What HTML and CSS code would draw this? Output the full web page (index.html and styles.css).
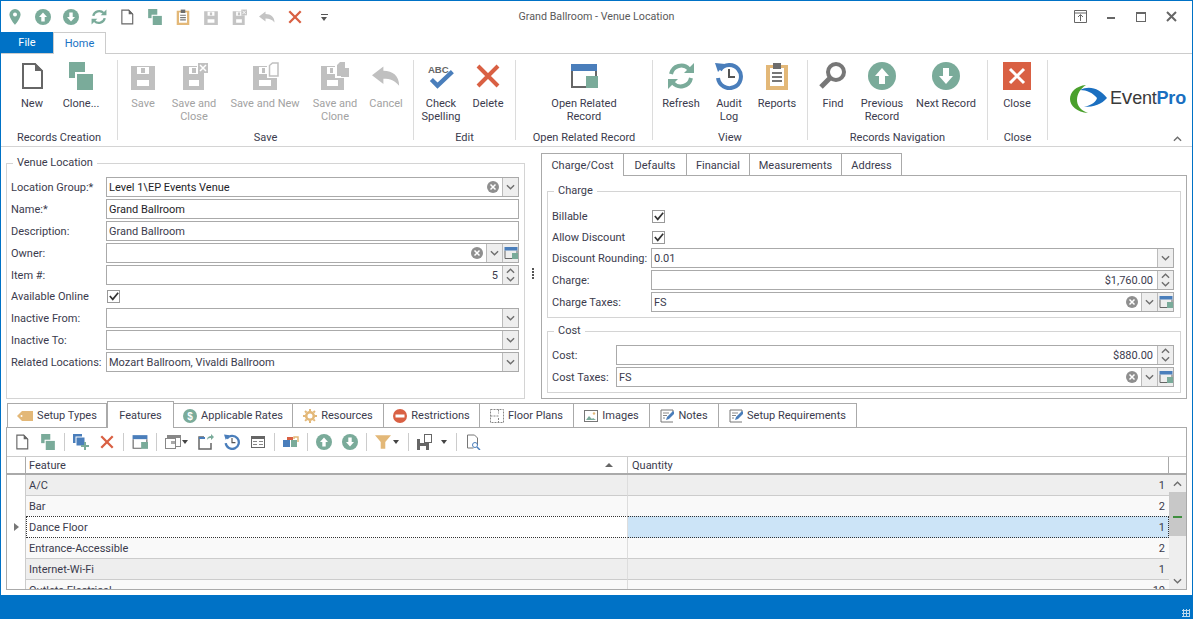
FILE: index.html
```html
<!DOCTYPE html>
<html lang="en">
<head>
<meta charset="utf-8">
<title>Grand Ballroom - Venue Location</title>
<link rel="stylesheet" href="styles.css">
</head>
<body>
<svg class="sprite" xmlns="http://www.w3.org/2000/svg">
  <symbol id="pin" viewBox="0 0 16 16"><path fill-rule="evenodd" d="M8 0a5.6 5.6 0 0 1 5.6 5.6C13.600 9.500 8 16 8 16S2.400 9.500 2.400 5.600A5.600 5.600 0 0 1 8 0zM8 3.600a2 2 0 1 0 0 4 2 2 0 0 0 0-4z" fill="#7aab9a"/></symbol>
  <symbol id="up" viewBox="0 0 28 28"><circle cx="14" cy="14" r="14" fill="#7aab9a"/><path d="M14 6l7 8h-4v8h-6v-8H7z" fill="#fff"/></symbol>
  <symbol id="down" viewBox="0 0 28 28"><circle cx="14" cy="14" r="14" fill="#7aab9a"/><path d="M14 22l-7-8h4V6h6v8h4z" fill="#fff"/></symbol>
  <symbol id="refresh" viewBox="0 0 28 28"><path d="M4 12A10.500 10.500 0 0 1 22 7" fill="none" stroke="#7aab9a" stroke-width="4"/><path d="M17 11h10V1z" fill="#7aab9a"/><path d="M24 16A10.500 10.500 0 0 1 6 21" fill="none" stroke="#7aab9a" stroke-width="4"/><path d="M11 17H1v10z" fill="#7aab9a"/></symbol>
  <symbol id="page" viewBox="0 0 28 28"><path d="M5 2h12l7 7v17H5z" fill="#fff" stroke="#666" stroke-width="2"/><path d="M17 1v8h8z" fill="#666"/></symbol>
  <symbol id="clone" viewBox="0 0 28 28"><rect x="2" y="0" width="16" height="16" fill="#7aab9a"/><rect x="9" y="11" width="18" height="18" fill="#7aab9a" stroke="#fff" stroke-width="2"/></symbol>
  <symbol id="clip" viewBox="0 0 28 28"><rect x="3" y="3" width="22" height="25" fill="#e3b878"/><rect x="7" y="6" width="14" height="18" fill="#fff"/><rect x="10" y="1" width="8" height="6" fill="#6d6d6d"/><path d="M9 11h10M9 15h10M9 19h10" stroke="#777" stroke-width="2"/></symbol>
  <symbol id="save" viewBox="0 0 28 28"><path fill-rule="evenodd" d="M2 4h24v24H2zM8 5v7h12V5zM8 18v6h12v-6z" fill="currentColor"/><rect x="12" y="6" width="4" height="5" fill="currentColor"/></symbol>
  <symbol id="savex" viewBox="0 0 28 28"><path fill-rule="evenodd" d="M3 4h21v24H3zM9 5v7h9V5zM9 18v6h10v-6z" fill="currentColor"/><rect x="12" y="6" width="4" height="5" fill="currentColor"/><rect x="17" y="0" width="11" height="11" fill="#fff"/><rect x="18" y="1" width="10" height="10" fill="currentColor"/><path d="M20 3l6 6M26 3l-6 6" stroke="#fff" stroke-width="1.500"/></symbol>
  <symbol id="saven" viewBox="0 0 28 28"><path fill-rule="evenodd" d="M2 4h24v24H2zM8 5v7h8V5zM8 18v6h12v-6z" fill="currentColor"/><rect x="11" y="6" width="3" height="5" fill="currentColor"/><rect x="16" y="0" width="12" height="16" fill="#fff"/><path d="M18.500 14V3.500l3-2.500h5.500v13z" fill="none" stroke="currentColor" stroke-width="1.500"/></symbol>
  <symbol id="savec" viewBox="0 0 28 28"><path fill-rule="evenodd" d="M0 4h23v24H0zM6 5v7h8V5zM6 18v6h11v-6z" fill="currentColor"/><rect x="9" y="6" width="3" height="5" fill="currentColor"/><rect x="14" y="0" width="14" height="16" fill="#fff"/><path d="M16 14V3l3-3h5v6h4v9h-8v-1z" fill="currentColor"/></symbol>
  <symbol id="undo" viewBox="0 0 32 28"><path d="M13 3L0 13l13 10v-6c8 0 13 2 18 8 0-11-7-17-18-17z" fill="currentColor"/></symbol>
  <symbol id="x" viewBox="0 0 28 28"><path d="M4 4l20 20M24 4L4 24" stroke="#d96043" stroke-width="4"/></symbol>
  <symbol id="spell" viewBox="0 0 32 28"><text x="1" y="10" class="abc">ABC</text><path d="M5 18l7 7L29 9" fill="none" stroke="#4a7ebb" stroke-width="5"/></symbol>
  <symbol id="win" viewBox="0 0 28 28"><path d="M2 9v16h15" fill="none" stroke="#666" stroke-width="2"/><path d="M26 9v5" stroke="#666" stroke-width="2"/><rect x="1" y="2" width="26" height="7" fill="#4a7ebb"/><rect x="16" y="14" width="12" height="12" fill="#7aab9a"/></symbol>
  <symbol id="audit" viewBox="0 0 28 28"><path d="M5 8A11.500 11.500 0 1 1 3 16" fill="none" stroke="#4a7ebb" stroke-width="4"/><path d="M0 1l10 1-7 8z" fill="#4a7ebb"/><path d="M14 7v8h6" fill="none" stroke="#555" stroke-width="2"/></symbol>
  <symbol id="find" viewBox="0 0 28 28"><circle cx="17" cy="10" r="8" fill="none" stroke="#777" stroke-width="4"/><path d="M11 16L2 25" stroke="#777" stroke-width="5"/></symbol>
  <symbol id="closebox" viewBox="0 0 28 28"><rect width="28" height="28" fill="#d96043"/><path d="M7 7l14 14M21 7L7 21" stroke="#fff" stroke-width="3"/></symbol>
  <symbol id="clear" viewBox="0 0 12 12"><circle cx="6" cy="6" r="6" fill="#8f8f8f"/><path d="M3.500 3.500l5 5M8.500 3.500l-5 5" stroke="#fff" stroke-width="1.500"/></symbol>
  <symbol id="chev" viewBox="0 0 10 6"><path d="M1 1l4 4 4-4" fill="none" stroke="#6d6d6d" stroke-width="1.500"/></symbol>
  <symbol id="chevu" viewBox="0 0 10 6"><path d="M1 5l4-4 4 4" fill="none" stroke="#6d6d6d" stroke-width="1.500"/></symbol>
  <symbol id="check" viewBox="0 0 12 12"><path d="M1 6l3.500 4L11 2" fill="none" stroke="#333" stroke-width="2"/></symbol>
  <symbol id="addclone" viewBox="0 0 16 16"><rect x="0" y="0" width="9" height="9" fill="#4a7ebb"/><rect x="3" y="3" width="9" height="9" fill="#4a7ebb" stroke="#fff"/><path d="M12 8v8M8 12h8" stroke="#7aab9a" stroke-width="2"/></symbol>
  <symbol id="dropwin" viewBox="0 0 16 16"><rect x="2.500" y="1.500" width="13" height="11" fill="#fff" stroke="#888"/><rect x="2" y="1" width="14" height="3" fill="#888"/><rect x="0.500" y="4.500" width="10" height="10" fill="#fff" stroke="#888"/><rect x="6" y="7" width="4" height="3" fill="#aaa"/></symbol>
  <symbol id="export" viewBox="0 0 16 16"><path d="M6 3H1v12h12V9" fill="none" stroke="#666" stroke-width="1.500"/><rect x="1" y="3" width="6" height="2" fill="#4a7ebb"/><path d="M9 6c0-3 2-4 4-4V0l3 3-3 3V4c-1 0-3 0-4 2z" fill="#7aab9a"/></symbol>
  <symbol id="layout" viewBox="0 0 16 16"><rect x="1.500" y="2.500" width="13" height="11" fill="#fff" stroke="#666"/><rect x="1" y="2" width="14" height="3" fill="#666"/><path d="M3 7h4v1H3zM9 7h4v1H9zM9 10h4v1H9zM3 10h4v1H3z" fill="#888"/></symbol>
  <symbol id="blocks" viewBox="0 0 16 16"><rect x="0" y="6" width="7" height="7" fill="#4a7ebb"/><rect x="8" y="6" width="6" height="7" fill="#7aab9a"/><rect x="4" y="3" width="6" height="3" fill="#d96043"/><path d="M11 5V3h4v5" fill="none" stroke="#e3b878" stroke-width="1.500"/></symbol>
  <symbol id="funnel" viewBox="0 0 14 14"><path d="M0 1h14L9 7v6H5V7z" fill="#e3b878"/></symbol>
  <symbol id="savebar" viewBox="0 0 16 16"><path fill-rule="evenodd" d="M0 5h10v2h2v9H0zM3 5v4h4V5zM3 12v4h6v-4z" fill="#666"/><rect x="7.500" y="0.500" width="7" height="8" fill="#fff" stroke="#666"/></symbol>
  <symbol id="docfind" viewBox="0 0 16 16"><path d="M2.500 1h7l3 3v7M2.500 1v13h6" fill="none" stroke="#777"/><circle cx="10" cy="11" r="2.500" fill="none" stroke="#4a7ebb"/><path d="M12 13l3 3" stroke="#4a7ebb" stroke-width="1.500"/></symbol>
  <symbol id="tag" viewBox="0 0 16 12"><path d="M5 1h11v10H5L0 6z" fill="#e3b878"/><circle cx="4.500" cy="6" r="1" fill="#fff"/></symbol>
  <symbol id="dollar" viewBox="0 0 14 14"><circle cx="7" cy="7" r="7" fill="#7aab9a"/><text x="7" y="11" class="dollar">$</text></symbol>
  <symbol id="gear" viewBox="0 0 14 14"><circle cx="7" cy="7" r="3.800" fill="none" stroke="#e3b878" stroke-width="2.600"/><path d="M7 0v14M0 7h14M2 2l10 10M12 2L2 12" stroke="#e3b878" stroke-width="2" stroke-dasharray="2.200 9.600"/></symbol>
  <symbol id="noentry" viewBox="0 0 14 14"><circle cx="7" cy="7" r="7" fill="#d96043"/><rect x="2.500" y="5.500" width="9" height="3" fill="#fff"/></symbol>
  <symbol id="floor" viewBox="0 0 14 14"><path d="M.5.500h13v13H.5zM8.500.5v4M8.500 9v4.500M.5 7h8" fill="none" stroke="#888" stroke-dasharray="2 1"/></symbol>
  <symbol id="image" viewBox="0 0 14 12"><rect x=".5" y=".5" width="13" height="11" fill="#fff" stroke="#777"/><path d="M2 10l3-4 3 3 1-1 3 2z" fill="#7aab9a"/><circle cx="10" cy="3.500" r="1.200" fill="#e3b878"/></symbol>
  <symbol id="note" viewBox="0 0 14 14"><path d="M13 5V1H1v12h12" fill="none" stroke="#777"/><path d="M3 4h6M3 6.500h4M3 9h2" stroke="#888"/><path d="M6 11l1-3 6-6 2 2-6 6z" fill="#4a7ebb"/></symbol>
  <symbol id="winpin" viewBox="0 0 13 13"><path d="M.5.500h12v12H.5zM.5 3h12M6.500 11V5M4 7l2.500-2.500L9 7" fill="none" stroke="#666"/></symbol>
  <symbol id="winx" viewBox="0 0 11 11"><path d="M1 1l9 9M10 1L1 10" stroke="#666" stroke-width="2"/></symbol>
  <symbol id="swoosh" viewBox="0 0 38 28"><path d="M16 0C6 1 0 7 0 14s7 13 18 14C10 25 7 20 7 15 7 9 10 4 16 0z" fill="#4aa02c"/><path d="M10 5c10-5 20-1 27 8-5 6-13 9-23 9 8-2 12-5 13-9-4-5-10-8-17-8z" fill="#1a6fc0"/></symbol>
</svg>

<div class="window">
  <header class="titlebar">
    <div class="qat">
      <svg class="qi"><use href="#pin"/></svg>
      <svg class="qi"><use href="#up"/></svg>
      <svg class="qi"><use href="#down"/></svg>
      <svg class="qi"><use href="#refresh"/></svg>
      <svg class="qi"><use href="#page"/></svg>
      <svg class="qi"><use href="#clone"/></svg>
      <svg class="qi"><use href="#clip"/></svg>
      <svg class="qi off"><use href="#save"/></svg>
      <svg class="qi off"><use href="#savex"/></svg>
      <svg class="qi off"><use href="#undo"/></svg>
      <svg class="qi"><use href="#x"/></svg>
      <span class="qat-more"></span>
    </div>
    <div class="title">Grand Ballroom - Venue Location</div>
    <div class="winctl">
      <svg class="ctl-pin"><use href="#winpin"/></svg>
      <span class="ctl-min"></span>
      <span class="ctl-max"></span>
      <svg class="ctl-close"><use href="#winx"/></svg>
    </div>
  </header>

  <nav class="ribbontabs">
    <div class="rt-file">File</div>
    <div class="rt-home">Home</div>
  </nav>

  <section class="ribbon">
    <div class="rgroup g1">
      <div class="rbtns">
        <div class="rbtn w42"><svg class="ri"><use href="#page"/></svg><span>New</span></div>
        <div class="rbtn w56"><svg class="ri"><use href="#clone"/></svg><span>Clone...</span></div>
      </div>
      <div class="rlabel">Records Creation</div>
    </div>
    <div class="rgroup g2">
      <div class="rbtns">
        <div class="rbtn w50 off"><svg class="ri"><use href="#save"/></svg><span>Save</span></div>
        <div class="rbtn w52 off"><svg class="ri"><use href="#savex"/></svg><span>Save and<br>Close</span></div>
        <div class="rbtn w90 off"><svg class="ri"><use href="#saven"/></svg><span>Save and New</span></div>
        <div class="rbtn w50 off"><svg class="ri"><use href="#savec"/></svg><span>Save and<br>Clone</span></div>
        <div class="rbtn w52 off"><svg class="ri"><use href="#undo"/></svg><span>Cancel</span></div>
      </div>
      <div class="rlabel">Save</div>
    </div>
    <div class="rgroup g3">
      <div class="rbtns">
        <div class="rbtn w54"><svg class="ri"><use href="#spell"/></svg><span>Check<br>Spelling</span></div>
        <div class="rbtn w40"><svg class="ri"><use href="#x"/></svg><span>Delete</span></div>
      </div>
      <div class="rlabel">Edit</div>
    </div>
    <div class="rgroup g4">
      <div class="rbtns">
        <div class="rbtn w136"><svg class="ri"><use href="#win"/></svg><span>Open Related<br>Record</span></div>
      </div>
      <div class="rlabel">Open Related Record</div>
    </div>
    <div class="rgroup g5">
      <div class="rbtns">
        <div class="rbtn w56"><svg class="ri"><use href="#refresh"/></svg><span>Refresh</span></div>
        <div class="rbtn w40"><svg class="ri"><use href="#audit"/></svg><span>Audit<br>Log</span></div>
        <div class="rbtn w56"><svg class="ri"><use href="#clip"/></svg><span>Reports</span></div>
      </div>
      <div class="rlabel">View</div>
    </div>
    <div class="rgroup g6">
      <div class="rbtns">
        <div class="rbtn w50"><svg class="ri"><use href="#find"/></svg><span>Find</span></div>
        <div class="rbtn w48"><svg class="ri"><use href="#up"/></svg><span>Previous<br>Record</span></div>
        <div class="rbtn w80"><svg class="ri"><use href="#down"/></svg><span>Next Record</span></div>
      </div>
      <div class="rlabel">Records Navigation</div>
    </div>
    <div class="rgroup g7">
      <div class="rbtns">
        <div class="rbtn w58"><svg class="ri"><use href="#closebox"/></svg><span>Close</span></div>
      </div>
      <div class="rlabel">Close</div>
    </div>
    <div class="logo">
      <svg class="swoosh"><use href="#swoosh"/></svg>
      <div class="logotext">E<span class="logo-v">v</span>ent<span class="logo-pro">Pro</span></div>
      <svg class="collapse"><use href="#chevu"/></svg>
    </div>
  </section>

  <main class="main">
    <div class="upper">
      <fieldset class="fs venue">
        <legend>Venue Location</legend>
        <div class="frow"><label>Location Group:*</label><div class="inp"><span class="val dark">Level 1\EP Events Venue</span><svg class="clr"><use href="#clear"/></svg><span class="bt"><svg class="chv"><use href="#chev"/></svg></span></div></div>
        <div class="frow"><label>Name:*</label><div class="inp"><span class="val dark">Grand Ballroom</span></div></div>
        <div class="frow"><label>Description:</label><div class="inp"><span class="val">Grand Ballroom</span></div></div>
        <div class="frow"><label>Owner:</label><div class="inp"><span class="val"></span><svg class="clr"><use href="#clear"/></svg><span class="bt"><svg class="chv"><use href="#chev"/></svg></span><span class="bt"><svg class="bwin"><use href="#win"/></svg></span></div></div>
        <div class="frow"><label>Item #:</label><div class="inp"><span class="val right">5</span><span class="bt spin"><svg class="chv"><use href="#chevu"/></svg><svg class="chv"><use href="#chev"/></svg></span></div></div>
        <div class="frow crow"><label>Available Online</label><span class="cb"><svg><use href="#check"/></svg></span></div>
        <div class="frow"><label>Inactive From:</label><div class="inp"><span class="val"></span><span class="bt"><svg class="chv"><use href="#chev"/></svg></span></div></div>
        <div class="frow"><label>Inactive To:</label><div class="inp"><span class="val"></span><span class="bt"><svg class="chv"><use href="#chev"/></svg></span></div></div>
        <div class="frow"><label>Related Locations:</label><div class="inp"><span class="val">Mozart Ballroom, Vivaldi Ballroom</span><span class="bt"><svg class="chv"><use href="#chev"/></svg></span></div></div>
      </fieldset>

      <div class="splitter"><i></i><i></i><i></i><i></i></div>

      <div class="rightpane">
        <div class="tabs small">
          <div class="tab active t83">Charge/Cost</div>
          <div class="tab t63">Defaults</div>
          <div class="tab t63">Financial</div>
          <div class="tab t92">Measurements</div>
          <div class="tab t60">Address</div>
        </div>
        <div class="tabpanel">
          <fieldset class="fs charge">
            <legend>Charge</legend>
            <div class="frow crow2"><label>Billable</label><span class="cb"><svg><use href="#check"/></svg></span></div>
            <div class="frow crow2"><label>Allow Discount</label><span class="cb"><svg><use href="#check"/></svg></span></div>
            <div class="frow"><label>Discount Rounding:</label><div class="inp"><span class="val">0.01</span><span class="bt"><svg class="chv"><use href="#chev"/></svg></span></div></div>
            <div class="frow"><label>Charge:</label><div class="inp"><span class="val right">$1,760.00</span><span class="bt spin"><svg class="chv"><use href="#chevu"/></svg><svg class="chv"><use href="#chev"/></svg></span></div></div>
            <div class="frow"><label>Charge Taxes:</label><div class="inp"><span class="val">FS</span><svg class="clr"><use href="#clear"/></svg><span class="bt"><svg class="chv"><use href="#chev"/></svg></span><span class="bt"><svg class="bwin"><use href="#win"/></svg></span></div></div>
          </fieldset>
          <fieldset class="fs cost">
            <legend>Cost</legend>
            <div class="frow"><label>Cost:</label><div class="inp"><span class="val right">$880.00</span><span class="bt spin"><svg class="chv"><use href="#chevu"/></svg><svg class="chv"><use href="#chev"/></svg></span></div></div>
            <div class="frow"><label>Cost Taxes:</label><div class="inp"><span class="val">FS</span><svg class="clr"><use href="#clear"/></svg><span class="bt"><svg class="chv"><use href="#chev"/></svg></span><span class="bt"><svg class="bwin"><use href="#win"/></svg></span></div></div>
          </fieldset>
        </div>
      </div>
    </div>

    <div class="lower">
      <div class="tabs big">
        <div class="tab t100"><svg class="ti16"><use href="#tag"/></svg>Setup Types</div>
        <div class="tab active t67">Features</div>
        <div class="tab t119"><svg class="ti"><use href="#dollar"/></svg>Applicable Rates</div>
        <div class="tab t91"><svg class="ti"><use href="#gear"/></svg>Resources</div>
        <div class="tab t96"><svg class="ti"><use href="#noentry"/></svg>Restrictions</div>
        <div class="tab t94"><svg class="ti"><use href="#floor"/></svg>Floor Plans</div>
        <div class="tab t76"><svg class="ti"><use href="#image"/></svg>Images</div>
        <div class="tab t69"><svg class="ti"><use href="#note"/></svg>Notes</div>
        <div class="tab t138"><svg class="ti"><use href="#note"/></svg>Setup Requirements</div>
      </div>
      <div class="gridpanel">
        <div class="toolbar">
          <svg class="tb"><use href="#page"/></svg>
          <svg class="tb"><use href="#clone"/></svg>
          <i class="sep"></i>
          <svg class="tb"><use href="#addclone"/></svg>
          <svg class="tb"><use href="#x"/></svg>
          <i class="sep"></i>
          <svg class="tb"><use href="#win"/></svg>
          <i class="sep"></i>
          <svg class="tb"><use href="#dropwin"/></svg><b class="caret"></b>
          <svg class="tb"><use href="#export"/></svg>
          <svg class="tb"><use href="#audit"/></svg>
          <svg class="tb"><use href="#layout"/></svg>
          <i class="sep"></i>
          <svg class="tb"><use href="#blocks"/></svg>
          <i class="sep"></i>
          <svg class="tb"><use href="#up"/></svg>
          <svg class="tb"><use href="#down"/></svg>
          <i class="sep"></i>
          <svg class="tb"><use href="#funnel"/></svg><b class="caret near"></b>
          <i class="sep"></i>
          <svg class="tb"><use href="#savebar"/></svg><b class="caret wide"></b>
          <i class="sep"></i>
          <svg class="tb"><use href="#docfind"/></svg>
        </div>
        <div class="ghead">
          <div class="ind"></div>
          <div class="hfeat">Feature<b class="sort"></b></div>
          <div class="hqty">Quantity</div>
          <div class="hcorner"></div>
        </div>
        <div class="gbody">
          <div class="rows">
            <div class="row alt"><div class="ind"></div><div class="cfeat">A/C</div><div class="cqty">1</div></div>
            <div class="row"><div class="ind"></div><div class="cfeat">Bar</div><div class="cqty">2</div></div>
            <div class="row sel"><div class="ind"><b class="rowarrow"></b></div><div class="cfeat">Dance Floor</div><div class="cqty">1</div></div>
            <div class="row"><div class="ind"></div><div class="cfeat">Entrance-Accessible</div><div class="cqty">2</div></div>
            <div class="row alt"><div class="ind"></div><div class="cfeat">Internet-Wi-Fi</div><div class="cqty">1</div></div>
            <div class="row"><div class="ind"></div><div class="cfeat">Outlets Electrical</div><div class="cqty">10</div></div>
          </div>
          <div class="vscroll">
            <svg class="sc-up"><use href="#chevu"/></svg>
            <div class="thumb"><i></i></div>
            <svg class="sc-down"><use href="#chev"/></svg>
          </div>
        </div>
      </div>
    </div>
  </main>

  <footer class="status"><span class="grip"></span></footer>
</div>
</body>
</html>
```
FILE: styles.css
```css
* { box-sizing: border-box; }
html, body { margin: 0; padding: 0; height: 100%; overflow: hidden; }
body { font-family: Roboto, "Liberation Sans", sans-serif; font-size: 11px; color: #3b3b4d; background: #fff; }
.sprite { width: 0; height: 0; position: absolute; }
.abc { font: bold 11px "Liberation Sans", sans-serif; fill: #666; }
.dollar { font: bold 10px "Liberation Sans", sans-serif; fill: #fff; text-anchor: middle; }

.window { width: 1193px; height: 619px; display: flex; flex-direction: column; border: 1px solid #0072c6; border-bottom: 0; background: #fff; }

/* title bar */
.titlebar { height: 31px; flex: none; display: flex; align-items: center; position: relative; }
.qat { display: flex; align-items: center; padding-left: 6px; width: 340px; }
.qi { width: 16px; height: 16px; margin-right: 12px; flex: none; }
.qi.off { color: #c4c4c4; }
.qat-more { width: 7px; height: 6px; margin-left: 6px; border-top: 1px solid #555; position: relative; }
.qat-more::after { content: ""; position: absolute; left: 0; top: 2px; border: 3.500px solid transparent; border-top: 4px solid #555; border-bottom: 0; }
.title { flex: 1; text-align: center; color: #5a5a5a; margin-right: 340px; font-size: 10.700px; }
.winctl { position: absolute; right: 15px; top: 0; height: 31px; display: flex; align-items: center; }
.ctl-pin { width: 13px; height: 13px; margin-right: 20px; }
.ctl-min { width: 8px; height: 2px; background: #666; margin-top: 3px; margin-right: 21px; }
.ctl-max { width: 10px; height: 10px; border: 1px solid #666; border-top-width: 2px; margin-right: 20px; }
.ctl-close { width: 11px; height: 11px; }

/* ribbon tabs */
.ribbontabs { height: 22px; flex: none; display: flex; border-bottom: 1px solid #ccc; }
.rt-file { width: 52px; height: 21px; background: #0072c6; color: #fff; text-align: center; line-height: 21px; }
.rt-home { width: 53px; height: 22px; border: 1px solid #ccc; border-bottom: 0; background: #fff; color: #1a73c4; text-align: center; line-height: 21px; }

/* ribbon */
.ribbon { height: 93px; flex: none; display: flex; border-bottom: 1px solid #d4d4d4; padding-top: 6px; }
.rgroup { height: 80px; border-right: 1px solid #dcdcdc; display: flex; flex-direction: column; flex: none; }
.g1 { width: 117px; padding-left: 10px; }
.g2 { width: 296px; }
.g3 { width: 102px; }
.g4 { width: 137px; }
.g5 { width: 155px; }
.g6 { width: 180px; }
.g7 { width: 60px; }
.rbtns { display: flex; height: 71px; flex: none; }
.rbtn { display: flex; flex-direction: column; align-items: center; text-align: center; line-height: 13px; color: #3b3b4d; padding-top: 2px; flex: none; }
.rbtn span { margin-top: 7px; display: block; white-space: nowrap; }
.rbtn.off { color: #a2a2a2; }
.rbtn.off .ri { color: #c0c0c0; }
.ri { width: 28px; height: 28px; flex: none; }
.w40 { width: 40px; } .w42 { width: 42px; } .w48 { width: 48px; } .w50 { width: 50px; } .w52 { width: 52px; }
.w54 { width: 54px; } .w56 { width: 56px; } .w58 { width: 58px; } .w80 { width: 80px; } .w90 { width: 90px; } .w136 { width: 136px; }
.rlabel { height: 14px; line-height: 14px; text-align: center; color: #3b3b4d; white-space: nowrap; }
.g1 .rlabel { margin-left: -10px; }

.logo { flex: 1; position: relative; display: flex; align-items: flex-start; padding: 25px 0 0 22px; }
.swoosh { width: 38px; height: 28px; flex: none; }
.logotext { font-family: "Liberation Sans", sans-serif; font-size: 18px; letter-spacing: -.2px; color: #3a3a3a; margin: 2px 0 0 2px; line-height: 20px; white-space: nowrap; }
.logo-v { font-size: 21px; }
.logo-pro { color: #1a6fc0; font-weight: bold; }
.collapse { position: absolute; right: 10px; bottom: 4px; width: 9px; height: 6px; }

/* main */
.main { flex: 1; display: flex; flex-direction: column; min-height: 0; padding: 0 5px; }
.upper { height: 252px; flex: none; display: flex; }

.fs { border: 1px solid #d4d4d4; margin: 0; padding: 0; min-width: 0; }
.fs legend { padding: 0 4px; margin-left: 2px; line-height: 16px; color: #3b3b4d; }
.venue { width: 519px; height: 244px; margin-top: 8px; padding: 6px 5px 0 4px; flex: none; }
.frow { display: flex; align-items: center; margin-bottom: 2px; }
.frow:last-child { margin-bottom: 0; }
.frow label { flex: none; white-space: nowrap; }
.venue .frow label { width: 95px; }
.crow { height: 19px; }
.crow2 { height: 19px; }
.crow2 + .crow2 { margin-bottom: 1px; }
.charge .frow label { width: 99px; }
.cost .frow label { width: 64px; }
.inp { flex: 1; height: 20px; border: 1px solid #aaa; display: flex; align-items: center; background: #fff; min-width: 0; }
.val { flex: 1; padding: 0 3px 0 2px; white-space: nowrap; color: #3b3b4d; }
.val.dark { color: #1e1e28; }
.val.right { text-align: right; padding-right: 4px; }
.clr { width: 12px; height: 12px; margin-right: 3px; flex: none; }
.bt { width: 16px; height: 18px; background: #eee; border-left: 1px solid #bbb; display: flex; align-items: center; justify-content: center; flex: none; }
.bt.spin { flex-direction: column; gap: 2px; }
.chv { width: 9px; height: 6px; }
.bwin { width: 14px; height: 14px; }
.cb { width: 13px; height: 13px; border: 1px solid #999; display: flex; align-items: center; justify-content: center; background: #fff; flex: none; margin: -1px 0 0 1px; }
.cb svg { width: 10px; height: 10px; }

.splitter { width: 16px; flex: none; display: flex; flex-direction: column; align-items: center; gap: 1px; justify-content: center; height: 252px; }
.splitter i { width: 2px; height: 2px; background: #555; }

.rightpane { flex: 1; display: flex; flex-direction: column; padding-top: 6px; min-width: 0; }
.tabs { display: flex; align-items: flex-end; flex: none; }
.tabs.small { height: 22px; }
.tabs.big { height: 26px; padding-left: 1px; }
.tab { height: 22px; border: 1px solid #aaa; border-left: 0; border-bottom: 0; display: flex; align-items: center; justify-content: center; white-space: nowrap; color: #3b3b4d; background: #fff; gap: 4px; flex: none; }
.tab:first-child { border-left: 1px solid #aaa; }
.tab.active { height: 23px; margin-bottom: -1px; position: relative; z-index: 1; border-left: 1px solid #aaa; }
.tabs.small .tab { padding-top: 1px; }
.tabs.big .tab { height: 24px; }
.tabs.big .tab.active { height: 27px; }
.tabs.small .tab.active { height: 23px; }
.t60 { width: 60px; } .t63 { width: 63px; } .t67 { width: 67px; } .t69 { width: 69px; } .t76 { width: 76px; } .t83 { width: 83px; }
.t91 { width: 91px; } .t92 { width: 92px; } .t94 { width: 94px; } .t96 { width: 96px; } .t100 { width: 100px; } .t119 { width: 119px; } .t138 { width: 138px; }
.ti { width: 14px; height: 14px; flex: none; }
.ti16 { width: 16px; height: 12px; flex: none; }
.tabpanel { width: 646px; height: 224px; border: 1px solid #aaa; padding: 7px 5px 0; }
.tabpanel .fs { padding: 8px 6px 5px 4px; }
.tabpanel .cost { margin-top: 5px; padding-top: 6px; }

/* lower */
.lower { flex: none; display: flex; flex-direction: column; margin-top: 2px; }
.gridpanel { width: 1181px; height: 163px; border: 1px solid #aaa; display: flex; flex-direction: column; overflow: hidden; }
.toolbar { height: 29px; flex: none; display: flex; align-items: center; padding-left: 7px; border-bottom: 1px solid #ccc; }
.tb { width: 16px; height: 16px; margin-right: 10px; flex: none; }
.sep { width: 1px; height: 18px; background: #ccc; margin: 0 8px 0 -2px; flex: none; }
.caret { width: 0; height: 0; border: 3.500px solid transparent; border-top: 4px solid #444; border-bottom: 0; margin-left: -9px; margin-right: 10px; flex: none; }
.caret.near { margin-left: -8px; margin-right: 11px; }
.caret.wide { margin-left: -2px; margin-right: 11px; }

.ghead { height: 18px; flex: none; display: flex; border-bottom: 2px solid #aaa; line-height: 17px; }
.ghead .ind { border-right: 1px solid #aaa; }
.ind { width: 19px; flex: none; position: relative; background: #fff; border-right: 1px solid #ccc; }
.hfeat { width: 602px; flex: none; padding-left: 3px; border-right: 1px solid #ccc; position: relative; }
.sort { position: absolute; right: 14px; top: 6px; border: 4px solid transparent; border-bottom: 4px solid #666; border-top: 0; }
.hqty { flex: 1; padding-left: 4px; border-right: 1px solid #aaa; }
.hcorner { width: 17px; flex: none; }

.gbody { flex: 1; display: flex; min-height: 0; }
.rows { flex: 1; overflow: hidden; min-width: 0; }
.row { display: flex; height: 21px; line-height: 20px; }
.row .cfeat { width: 602px; flex: none; padding: 1px 0 0 3px; background: #f9f9f9; border-bottom: 1px solid #ccc; border-right: 1px solid #ddd; }
.row .cqty { flex: 1; text-align: right; padding: 1px 4px 0 0; background: #f9f9f9; border-bottom: 1px solid #ccc; }
.row.alt .cfeat, .row.alt .cqty { background: #eee; }
.row.sel .cfeat { background: #fff; border-top: 1px dotted #333; border-bottom: 1px dotted #333; border-left: 1px dotted #333; padding: 1px 0 0 2px; }
.row.sel .cqty { background: #cce4f7; border-top: 1px dotted #333; border-bottom: 1px dotted #333; border-right: 1px dotted #333; padding: 1px 3px 0 0; }
.row.sel { margin-top: -1px; height: 22px; }
.rowarrow { position: absolute; left: 7px; top: 7px; border: 4px solid transparent; border-left: 5px solid #777; border-right: 0; }

.vscroll { width: 17px; flex: none; background: #eee; position: relative; }
.sc-up { position: absolute; left: 4px; top: 6px; width: 9px; height: 6px; }
.sc-down { position: absolute; left: 4px; bottom: 5px; width: 9px; height: 6px; }
.thumb { position: absolute; left: 0; right: 0; top: 17px; height: 44px; background: #c8c8c8; }
.thumb i { position: absolute; left: 4px; top: 24px; width: 9px; height: 2px; background: #3f8f3f; }

.status { height: 24px; flex: none; background: #0072c6; position: relative; margin-top: auto; }
.grip { position: absolute; right: 2px; bottom: 2px; width: 8px; height: 8px; background: radial-gradient(circle, #bcd9ef 1px, transparent 1.200px) 0 0 / 3px 3px; }
```
